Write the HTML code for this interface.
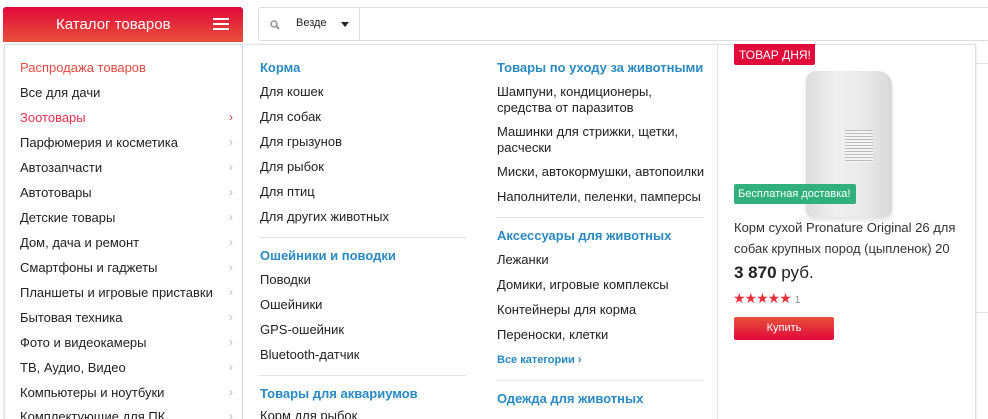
<!DOCTYPE html>
<html><head><meta charset="utf-8"><style>
*{margin:0;padding:0;box-sizing:border-box}
html,body{width:988px;height:419px;overflow:hidden}
body{background:#fff;font-family:"Liberation Sans",Arial,sans-serif;font-size:13px;color:#222}
#w{position:relative;width:988px;height:419px;overflow:hidden}
.a{position:absolute;white-space:nowrap}
.hdr{left:3px;top:7px;width:240px;height:35px;background:linear-gradient(#e2093b,#e7503a);border-radius:3px 3px 0 0;color:#fff;font-size:15px}
.search{left:258px;top:7px;width:730px;height:34px;border:1px solid #ddd;border-right:none;border-radius:3px 0 0 3px}
.left{left:4px;top:44px;width:239px;height:375px;border:1px solid #e0e0e0;border-bottom:none;box-shadow:0 1px 3px rgba(0,0,0,.15);background:#fff}
.mid{left:243px;top:44px;width:733px;height:375px;border:1px solid #e0e0e0;border-left:none;border-bottom:none;box-shadow:0 1px 3px rgba(0,0,0,.15);background:#fff}
.mi{left:20px;line-height:16px;margin-top:1px}
.ch{left:229px;color:#bbb;font-size:12px;margin-top:1px}
.h{color:#2a8ac4;font-weight:bold;font-size:13px}
.l{line-height:16px}
.hr{height:1px;background:#e4e4e4}
</style></head><body><div id="w">
<div class="a" style="left:975px;top:63px;width:13px;height:1px;background:#e4e4e4"></div>
<div class="a" style="left:975px;top:312px;width:13px;height:1px;background:#e4e4e4"></div>
<div class="a hdr"><span class="a" style="left:53px;top:9px">Каталог товаров</span>
<span class="a" style="left:210px;top:11px;width:16px;height:2px;background:#fff;box-shadow:0 5px 0 #fff,0 10px 0 #fff"></span></div>
<div class="a search"><svg class="a" style="left:11px;top:12px" width="10" height="10" viewBox="0 0 10 10"><circle cx="4" cy="4" r="3" fill="none" stroke="#999" stroke-width="1.6"/><path d="M6 6L9 9" stroke="#999" stroke-width="2"/></svg><span class="a" style="left:37px;top:9px;font-size:11px">Везде</span><span class="a" style="left:82px;top:14px;border:4px solid transparent;border-top:5px solid #222"></span><span class="a" style="left:100px;top:0;width:1px;height:32px;background:#ddd"></span></div>
<div class="a left"></div>
<div class="a mid"><div class="a" style="left:474px;top:0;width:1px;height:375px;background:#e4e4e4"></div></div>
<div class="a mi" style="top:59px;color:#e8483e">Распродажа товаров</div>
<div class="a mi" style="top:84px">Все для дачи</div>
<div class="a mi" style="top:109px;color:#e8304e">Зоотовары</div><div class="a ch" style="top:109px;color:#e8304e">›</div>
<div class="a mi" style="top:134px">Парфюмерия и косметика</div><div class="a ch" style="top:134px">›</div>
<div class="a mi" style="top:159px">Автозапчасти</div><div class="a ch" style="top:159px">›</div>
<div class="a mi" style="top:184px">Автотовары</div><div class="a ch" style="top:184px">›</div>
<div class="a mi" style="top:209px">Детские товары</div><div class="a ch" style="top:209px">›</div>
<div class="a mi" style="top:234px">Дом, дача и ремонт</div><div class="a ch" style="top:234px">›</div>
<div class="a mi" style="top:259px">Смартфоны и гаджеты</div><div class="a ch" style="top:259px">›</div>
<div class="a mi" style="top:284px">Планшеты и игровые приставки</div><div class="a ch" style="top:284px">›</div>
<div class="a mi" style="top:309px">Бытовая техника</div><div class="a ch" style="top:309px">›</div>
<div class="a mi" style="top:334px">Фото и видеокамеры</div><div class="a ch" style="top:334px">›</div>
<div class="a mi" style="top:359px">ТВ, Аудио, Видео</div><div class="a ch" style="top:359px">›</div>
<div class="a mi" style="top:384px">Компьютеры и ноутбуки</div><div class="a ch" style="top:384px">›</div>
<div class="a mi" style="top:408px">Комплектующие для ПК</div><div class="a ch" style="top:408px">›</div>

<div class="a h" style="left:260px;top:60px">Корма</div>
<div class="a l" style="left:260px;top:84px">Для кошек</div>
<div class="a l" style="left:260px;top:109px">Для собак</div>
<div class="a l" style="left:260px;top:134px">Для грызунов</div>
<div class="a l" style="left:260px;top:159px">Для рыбок</div>
<div class="a l" style="left:260px;top:184px">Для птиц</div>
<div class="a l" style="left:260px;top:209px">Для других животных</div>
<div class="a hr" style="left:259px;top:237px;width:207px"></div>
<div class="a h" style="left:260px;top:248px">Ошейники и поводки</div>
<div class="a l" style="left:260px;top:272px">Поводки</div>
<div class="a l" style="left:260px;top:297px">Ошейники</div>
<div class="a l" style="left:260px;top:322px">GPS-ошейник</div>
<div class="a l" style="left:260px;top:347px">Bluetooth-датчик</div>
<div class="a hr" style="left:259px;top:375px;width:207px"></div>
<div class="a h" style="left:260px;top:386px">Товары для аквариумов</div>
<div class="a l" style="left:260px;top:408px">Корм для рыбок</div>

<div class="a h" style="left:497px;top:60px">Товары по уходу за животными</div>
<div class="a l" style="left:497px;top:84px">Шампуни, кондиционеры,<br>средства от паразитов</div>
<div class="a l" style="left:497px;top:124px">Машинки для стрижки, щетки,<br>расчески</div>
<div class="a l" style="left:497px;top:164px">Миски, автокормушки, автопоилки</div>
<div class="a l" style="left:497px;top:189px">Наполнители, пеленки, памперсы</div>
<div class="a hr" style="left:496px;top:217px;width:208px"></div>
<div class="a h" style="left:497px;top:228px">Аксессуары для животных</div>
<div class="a l" style="left:497px;top:252px">Лежанки</div>
<div class="a l" style="left:497px;top:277px">Домики, игровые комплексы</div>
<div class="a l" style="left:497px;top:302px">Контейнеры для корма</div>
<div class="a l" style="left:497px;top:327px">Переноски, клетки</div>
<div class="a h" style="left:497px;top:354px;font-size:11px">Все категории ›</div>
<div class="a hr" style="left:496px;top:380px;width:208px"></div>
<div class="a h" style="left:497px;top:391px">Одежда для животных</div>

<div class="a" style="left:806px;top:71px;width:86px;height:146px;background:linear-gradient(90deg,#dcdcdc,#efefef 35%,#e8e8e8 70%,#d8d8d8);border-radius:10px 14px 8px 8px;box-shadow:0 3px 5px rgba(0,0,0,.12)"></div>
<div class="a" style="left:845px;top:130px;width:28px;height:32px;background:repeating-linear-gradient(#bbb 0 1px,#f4f4f4 1px 3px)"></div>
<div class="a" style="left:734px;top:44px;width:81px;height:21px;background:#e2093b;color:#fff;font-size:12px;padding:4px 0 0 5px;border-radius:0 0 2px 2px">ТОВАР ДНЯ!</div>
<div class="a" style="left:734px;top:184px;width:122px;height:20px;background:#30b07e;color:#fff;font-size:11px;padding:4px 0 0 4px;border-radius:2px">Бесплатная доставка!</div>
<div class="a" style="left:734px;top:217px;line-height:21px;font-size:13px;color:#333">Корм сухой Pronature Original 26 для<br>собак крупных пород (цыпленок) 20</div>
<div class="a" style="left:734px;top:263px;font-size:17px"><b>3 870</b> руб.</div>
<div class="a" style="left:733px;top:290px;color:#e8303a;font-size:14px;letter-spacing:-1px">★★★★★<span style="color:#888;font-size:10px;letter-spacing:0;margin-left:4px">1</span></div>
<div class="a" style="left:734px;top:317px;width:100px;height:23px;background:linear-gradient(#e7503a,#e2093b);border-radius:2px;color:#fff;font-size:11px;text-align:center;line-height:23px">Купить</div>
</div></body></html>
